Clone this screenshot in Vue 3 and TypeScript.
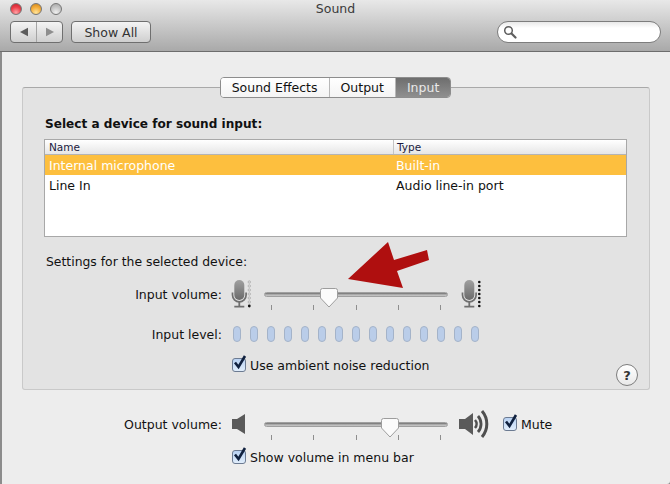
<script setup lang="ts">
interface Device {
  name: string
  type: string
  selected?: boolean
}

const tabs = ['Sound Effects', 'Output', 'Input']
const devices: Device[] = [
  { name: 'Internal microphone', type: 'Built-in', selected: true },
  { name: 'Line In', type: 'Audio line-in port' }
]
const ticks = [0, 1, 2, 3, 4]
const pills = Array.from({ length: 15 }, (_, i) => i)
</script>

<template>
  <div class="window">
    <header class="titlebar">
      <div class="title-row">
        <div class="lights">
          <span class="light red"></span>
          <span class="light yellow"></span>
          <span class="light off"></span>
        </div>
        <span class="title">Sound</span>
      </div>
      <div class="tools">
        <div class="nav">
          <button class="nav-btn">
            <svg width="10" height="10" viewBox="0 0 10 10"><path d="M1 5 9 .8v8.4z" fill="#5c5c5c" /></svg>
          </button>
          <button class="nav-btn">
            <svg width="10" height="10" viewBox="0 0 10 10"><path d="M9 5 1 .8v8.4z" fill="#8e8e8e" /></svg>
          </button>
        </div>
        <button class="show-all">Show All</button>
        <div class="search">
          <svg width="14" height="14" viewBox="0 0 14 14" fill="none" stroke="#5e5e5e">
            <circle cx="5.5" cy="5.5" r="3.8" stroke-width="1.5" />
            <path d="M8.5 8.5 12.5 12.5" stroke-width="2.2" stroke-linecap="round" />
          </svg>
        </div>
      </div>
    </header>

    <main class="content">
      <section class="group">
        <div class="tabs">
          <button v-for="tab in tabs" :key="tab" class="tab" :class="{ active: tab === 'Input' }">{{ tab }}</button>
        </div>

        <h2 class="heading">Select a device for sound input:</h2>

        <div class="table">
          <div class="table-row table-head">
            <span class="col-name">Name</span>
            <span class="col-type">Type</span>
          </div>
          <div v-for="d in devices" :key="d.name" class="table-row device" :class="{ selected: d.selected }">
            <span class="col-name">{{ d.name }}</span>
            <span class="col-type">{{ d.type }}</span>
          </div>
        </div>

        <p class="settings-label">Settings for the selected device:</p>

        <div class="row input-volume">
          <span class="label">Input volume:</span>
          <svg class="mic" width="20" height="28" viewBox="0 0 20 28">
            <defs>
              <linearGradient id="micFill" x1="0" y1="0" x2="0" y2="1">
                <stop offset="0" stop-color="#a0a0a0" />
                <stop offset="1" stop-color="#6a6a6a" />
              </linearGradient>
            </defs>
            <rect x="3.3" y="0" width="10" height="20" rx="5" fill="url(#micFill)" />
            <path d="M1.5 12.5v2.5a6.8 6.8 0 0 0 13.6 0v-2.5" fill="none" stroke="#6f6f6f" stroke-width="1.7" />
            <path d="M8.3 22v4M3.3 26.7h10" stroke="#6f6f6f" stroke-width="1.8" />
            <circle v-for="n in 6" :key="n" cx="18.3" :cy="2 + (n - 1) * 4" r="1.2" fill="none" stroke="#aaa" stroke-width=".8" />
            <circle cx="18.3" cy="26" r="1.4" fill="#111" />
          </svg>
          <div class="slider">
            <div class="track"></div>
            <div class="thumb" style="left: 56px">
              <svg width="18" height="20" viewBox="0 0 18 20"><path d="M2.5.5h13a2 2 0 0 1 2 2V10L9 19 .5 10V2.5a2 2 0 0 1 2-2z" fill="#fbfbfb" stroke="#9d9d9d" /></svg>
            </div>
            <div class="ticks"><i v-for="t in ticks" :key="t"></i></div>
          </div>
          <svg class="mic mic-right" width="20" height="28" viewBox="0 0 20 28">
            <rect x="3.3" y="0" width="10" height="20" rx="5" fill="url(#micFill)" />
            <path d="M1.5 12.5v2.5a6.8 6.8 0 0 0 13.6 0v-2.5" fill="none" stroke="#6f6f6f" stroke-width="1.7" />
            <path d="M8.3 22v4M3.3 26.7h10" stroke="#6f6f6f" stroke-width="1.8" />
            <circle v-for="n in 7" :key="n" cx="18.3" :cy="2 + (n - 1) * 4" r="1.3" fill="#111" />
          </svg>
        </div>

        <div class="row input-level">
          <span class="label">Input level:</span>
          <div class="pills"><i v-for="p in pills" :key="p"></i></div>
        </div>

        <label class="check noise">
          <span class="box">
            <svg width="18" height="18" viewBox="0 0 18 18"><path d="M4 7.5 7.5 12 14 1" fill="none" stroke="#10213f" stroke-width="2.6" /></svg>
          </span>
          Use ambient noise reduction
        </label>

        <button class="help">?</button>
      </section>

      <div class="row output-volume">
        <span class="label">Output volume:</span>
        <svg class="speaker" width="13" height="20" viewBox="0 0 13 20"><path d="M0 5h5l8-5v20l-8-5H0z" fill="#5a5a5a" /></svg>
        <div class="slider">
          <div class="track"></div>
          <div class="thumb" style="left: 117px">
            <svg width="18" height="20" viewBox="0 0 18 20"><path d="M2.5.5h13a2 2 0 0 1 2 2V10L9 19 .5 10V2.5a2 2 0 0 1 2-2z" fill="#fbfbfb" stroke="#9d9d9d" /></svg>
          </div>
          <div class="ticks"><i v-for="t in ticks" :key="t"></i></div>
        </div>
        <svg class="speaker-loud" width="34" height="32" viewBox="0 0 34 32" fill="none" stroke="#4f4f4f">
          <path d="M0 11h6l8-6v22l-8-6H0z" fill="#5a5a5a" stroke="none" />
          <path d="M16 12a6 6 0 0 1 0 8" stroke-width="2.6" />
          <path d="M19 8a12 12 0 0 1 0 16" stroke-width="2.8" />
          <path d="M23 3a20 20 0 0 1 0 26" stroke-width="3" />
        </svg>
        <label class="check mute">
          <span class="box">
            <svg width="18" height="18" viewBox="0 0 18 18"><path d="M4 7.5 7.5 12 14 1" fill="none" stroke="#10213f" stroke-width="2.6" /></svg>
          </span>
          Mute
        </label>
      </div>

      <label class="check menu-bar">
        <span class="box">
          <svg width="18" height="18" viewBox="0 0 18 18"><path d="M4 7.5 7.5 12 14 1" fill="none" stroke="#10213f" stroke-width="2.6" /></svg>
        </span>
        Show volume in menu bar
      </label>
    </main>

    <svg class="arrow" width="90" height="50" viewBox="0 0 90 50">
      <path d="M8 37 48 0 54 18 87 8 89 18 57 29 63 46z" fill="#af0f0f" />
    </svg>
  </div>
</template>

<style>
html,
body {
  margin: 0;
  background: #8a8a8a;
}
</style>

<style scoped>
.window {
  position: relative;
  width: 670px;
  height: 484px;
  overflow: hidden;
  background: #ededed;
  border-bottom-right-radius: 3px;
  font-family: "DejaVu Sans", sans-serif;
  font-size: 12.5px;
  color: #111;
}

button {
  font-family: inherit;
  padding: 0;
}

.titlebar {
  box-sizing: border-box;
  height: 52px;
  padding: 1px 9px 0 10px;
  background: linear-gradient(#e8e8e8, #a9a9a9);
  border-bottom: 1px solid #6d6d6d;
}

.title-row {
  position: relative;
  height: 20px;
  display: flex;
  justify-content: center;
  align-items: center;
}

.title {
  font-size: 12.5px;
  color: #3a3a3a;
  margin-top: -6px;
}

.lights {
  position: absolute;
  left: 0;
  top: 2px;
  display: flex;
  gap: 8px;
}

.light {
  width: 12px;
  height: 12px;
  border-radius: 50%;
  border: 0.5px solid #777;
  box-sizing: border-box;
}

.light.red {
  background: radial-gradient(circle at 50% 85%, #ffa3a6, #ec3c48 55%, #c0222c);
}

.light.yellow {
  background: radial-gradient(circle at 50% 85%, #ffe59c, #f3ab38 55%, #c98219);
}

.light.off {
  background: radial-gradient(circle at 50% 85%, #f0f0f0, #c0c0c0 60%, #a5a5a5);
}

.tools {
  display: flex;
  align-items: center;
}

.nav {
  display: flex;
  width: 53px;
  height: 22px;
  box-sizing: border-box;
  border: 1px solid #6f6f6f;
  border-radius: 4px;
  background: linear-gradient(#f4f4f4, #cfcfcf);
}

.nav-btn {
  flex: 1;
  border: 0;
  background: none;
  display: flex;
  align-items: center;
  justify-content: center;
}

.nav-btn + .nav-btn {
  border-left: 1px solid #a5a5a5;
}

.show-all {
  width: 80px;
  height: 22px;
  margin-left: 8px;
  border: 1px solid #6f6f6f;
  border-radius: 4px;
  background: linear-gradient(#f4f4f4, #cfcfcf);
  font-size: 12.5px;
  color: #333;
}

.search {
  width: 164px;
  height: 22px;
  margin-left: auto;
  box-sizing: border-box;
  padding: 3px 0 0 5px;
  border: 1px solid #7d7d7d;
  border-radius: 11px;
  background: linear-gradient(#e9e9e9, #fff 30%);
}

.search svg {
  display: block;
}

.content {
  box-sizing: border-box;
  height: 432px;
  padding-top: 35px;
  border-left: 2px solid #8c8c8c;
}

.group {
  position: relative;
  box-sizing: border-box;
  width: 628px;
  height: 303px;
  margin-left: 20px;
  padding: 0 22px 0 21px;
  background: #e3e3e3;
  border: 1px solid #c9c9c9;
  border-top-color: #a9a9a9;
  border-radius: 3px;
}

.tabs {
  display: flex;
  width: max-content;
  height: 21px;
  box-sizing: border-box;
  margin: -11px auto 0;
  border: 1px solid #8d8d8d;
  border-radius: 4px;
  background: #fff;
  overflow: hidden;
}

.tab {
  border: 0;
  background: linear-gradient(#fff, #f4f4f4);
  font-size: 12.5px;
  line-height: 18px;
  color: #111;
  padding: 0 11px;
}

.tab + .tab {
  border-left: 1px solid #b8b8b8;
}

.tab.active {
  background: linear-gradient(#6e6e6e, #8f8f8f);
  color: #e9e9e9;
}

.heading {
  margin: 18px 0 0 1px;
  font-size: 12.1px;
  font-weight: 700;
  line-height: 16px;
}

.table {
  box-sizing: border-box;
  height: 98px;
  margin-top: 7px;
  background: #fff;
  border: 1px solid #a8a8a8;
}

.table-row {
  display: flex;
  align-items: center;
}

.table-head {
  box-sizing: border-box;
  height: 15px;
  font-size: 10.5px;
  color: #1a1a40;
  background: linear-gradient(#fff, #e6e6e6);
  border-bottom: 1px solid #b4b4b4;
}

.device {
  box-sizing: border-box;
  height: 20px;
  padding-top: 1px;
  font-size: 12.5px;
}

.device.selected {
  background: #fdbf3e;
  color: #fff;
}

.col-name {
  box-sizing: border-box;
  width: 348px;
  padding-left: 4px;
}

.col-type {
  padding-left: 3px;
}

.table-head .col-type {
  align-self: stretch;
  display: flex;
  align-items: center;
  flex: 1;
  border-left: 1px solid #c4c4c4;
}

.settings-label {
  margin: 17px 0 0 2px;
  font-size: 12.4px;
  line-height: 16px;
}

.row {
  display: flex;
  align-items: center;
}

.label {
  box-sizing: border-box;
  text-align: right;
  white-space: nowrap;
}

.group .label {
  width: 178px;
}

.input-volume {
  height: 28px;
  margin-top: 10px;
}

.mic {
  margin-left: 9px;
  flex: none;
}

.mic-right {
  margin-left: 13px;
}

.slider {
  position: relative;
  width: 184px;
  height: 28px;
  margin-left: 13px;
  flex: none;
}

.track {
  position: absolute;
  left: 0;
  right: 0;
  top: 12px;
  height: 5px;
  border-radius: 3px;
  border: 1px solid #a0a0a0;
  box-sizing: border-box;
  background: linear-gradient(#6e6e6e, #b5b5b5 60%, #c9c9c9);
}

.thumb {
  position: absolute;
  top: 8px;
  line-height: 0;
}

.ticks {
  position: absolute;
  left: 7px;
  top: 25px;
  width: 170px;
  display: flex;
  justify-content: space-between;
}

.ticks i {
  width: 1px;
  height: 5px;
  background: #8e8e8e;
}

.input-level {
  height: 16px;
  margin-top: 18px;
}

.pills {
  display: flex;
  gap: 9px;
  margin-left: 11px;
}

.pills i {
  box-sizing: border-box;
  width: 8px;
  height: 16px;
  border-radius: 4px;
  border: 1px solid #a4b3c9;
  background: #bacde9;
}

.check {
  display: flex;
  align-items: center;
  white-space: nowrap;
}

.box {
  position: relative;
  box-sizing: border-box;
  width: 14px;
  height: 14px;
  margin-right: 4px;
  flex: none;
  border: 1px solid #6c7b92;
  border-radius: 3px;
  background: linear-gradient(#b9d2f3, #e0edfb);
}

.box svg {
  position: absolute;
  left: -2px;
  top: -4px;
}

.noise {
  margin: 15px 0 0 188px;
  height: 16px;
}

.help {
  position: absolute;
  right: 11px;
  bottom: 3px;
  width: 22px;
  height: 22px;
  box-sizing: border-box;
  border: 1px solid #7d7d7d;
  border-radius: 50%;
  background: linear-gradient(#fff, #e9e9e9);
  font-size: 13px;
  font-weight: 700;
  color: #333;
}

.output-volume {
  height: 32px;
  margin-top: 18px;
}

.output-volume .label {
  width: 220px;
}

.speaker {
  margin-left: 10px;
  flex: none;
}

.output-volume .slider {
  margin-left: 19px;
}

.speaker-loud {
  margin-left: 11px;
  flex: none;
}

.mute {
  margin-left: 10px;
}

.menu-bar {
  margin: 9px 0 0 230px;
  height: 16px;
}

.arrow {
  position: absolute;
  left: 340px;
  top: 242px;
}
</style>
